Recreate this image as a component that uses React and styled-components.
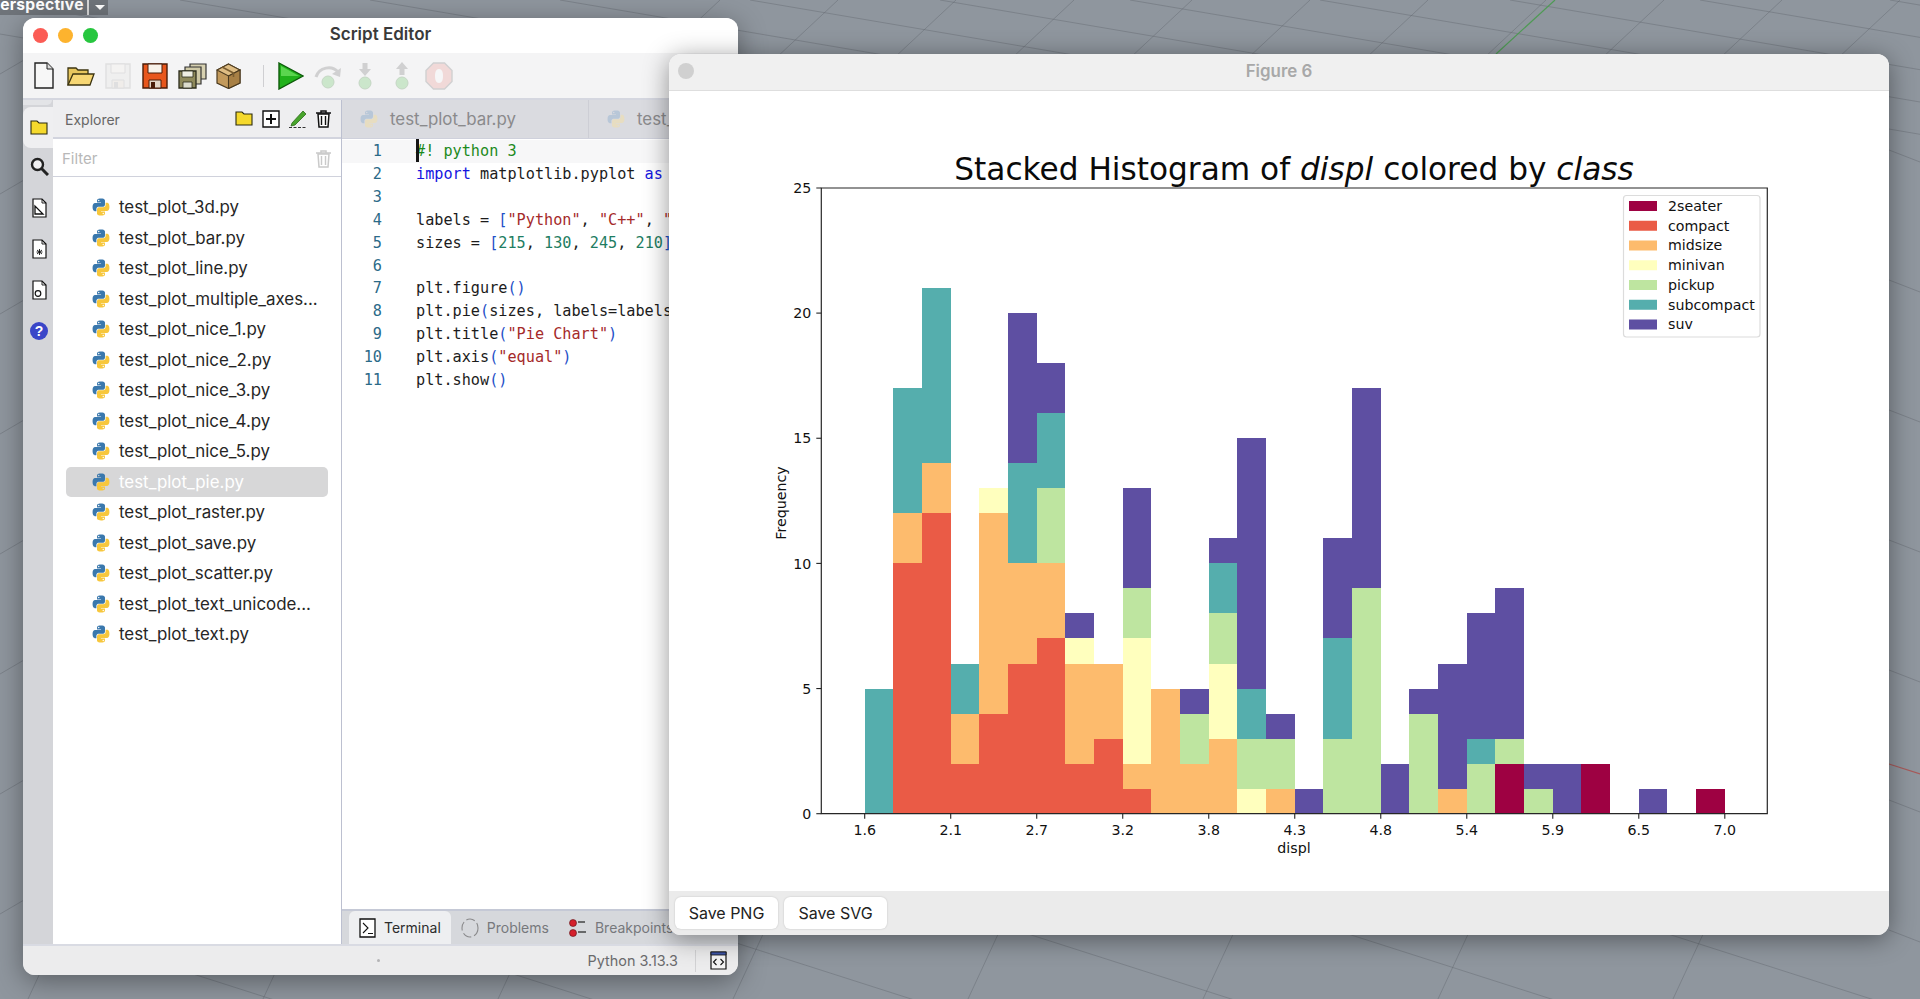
import React from "react";
import styled, { createGlobalStyle } from "styled-components";

const GlobalStyle = createGlobalStyle`
  html, body { margin: 0; padding: 0; width: 100%; height: 100%; overflow: hidden; }
  body { background: #8f969e; font-family: Inter, "Liberation Sans", sans-serif; }
`;

const Desktop = styled.div`
  position: relative;
  width: 1920px;
  height: 999px;
  overflow: hidden;
  background: #8f969e;
`;

const Backdrop = styled.svg`
  position: absolute;
  inset: 0;
`;

const ViewLabel = styled.div`
  position: absolute;
  top: 0;
  left: 0;
  width: 108px;
  height: 15px;
  display: flex;
  align-items: center;
  background: #6f747a;
  color: #fff;
  font-size: 15.6px;
  font-weight: 700;
  overflow: hidden;
`;

const ViewText = styled.span`
  margin-left: -10px;
  width: 99px;
  height: 15px;
  letter-spacing: 0.25px;
  border-right: 2px solid #d8d8d8;
  box-sizing: border-box;
  line-height: 10px;
`;

const ViewArrow = styled.span`
  margin-left: 6px;
  border-left: 5px solid transparent;
  border-right: 5px solid transparent;
  border-top: 5px solid #fff;
`;

const EditorWindow = styled.div`
  position: absolute;
  left: 23px;
  top: 18px;
  width: 715px;
  height: 957px;
  display: flex;
  flex-direction: column;
  border-radius: 12px;
  overflow: hidden;
  background: #ededef;
  box-shadow: 0 6px 28px rgba(0, 0, 0, 0.38);
`;

const TitleBar = styled.div`
  position: relative;
  height: 35px;
  flex: none;
  display: flex;
  align-items: center;
  justify-content: center;
  padding-bottom: 3px;
  box-sizing: border-box;
  background: #fff;
  color: #3a3a3a;
  font-size: 17px;
  font-weight: 600;
`;

const Lights = styled.div`
  position: absolute;
  left: 10px;
  top: 10px;
  display: flex;
  gap: 10px;
`;

const Light = styled.span`
  width: 15px;
  height: 15px;
  border-radius: 50%;
  background: ${(p) => p.$color};
`;

const Toolbar = styled.div`
  height: 47px;
  flex: none;
  display: flex;
  align-items: center;
  gap: 7px;
  padding-left: 6px;
  background: #f4f4f5;
  border-bottom: 2px solid #d5d7e0;
  box-sizing: border-box;
`;

const ToolSlot = styled.span`
  width: 30px;
  height: 30px;
  display: flex;
  align-items: center;
  justify-content: center;
  opacity: ${(p) => (p.$faded ? 0.22 : 1)};
`;

const ToolDivider = styled.span`
  width: 1px;
  height: 22px;
  margin: 0 5px 0 12px;
  background: #cfcfd2;
`;

const Workspace = styled.div`
  flex: 1;
  display: flex;
  min-height: 0;
`;

const Rail = styled.div`
  width: 30px;
  flex: none;
  display: flex;
  flex-direction: column;
  background: #d4d5d9;
`;

const RailCap = styled.div`
  height: 5px;
  margin-right: 1px;
  background: #e3e4e7;
  border-bottom-right-radius: 6px;
  flex: none;
`;

const RailTab = styled.div`
  height: 41px;
  flex: none;
  display: flex;
  align-items: center;
  justify-content: center;
  padding-left: 2px;
  box-sizing: border-box;
  background: ${(p) => (p.$active ? "#efeff1" : "transparent")};
  border-radius: ${(p) => (p.$active ? "8px 0 0 8px" : "0")};
  margin-top: ${(p) => (p.$active ? "2px" : "0")};
  margin-bottom: ${(p) => (p.$active ? "-2px" : "0")};
`;

const Explorer = styled.div`
  width: 289px;
  flex: none;
  display: flex;
  flex-direction: column;
  background: #fff;
  border-right: 1px solid #bcc0d0;
  box-sizing: border-box;
`;

const ExplorerHead = styled.div`
  height: 39px;
  flex: none;
  display: flex;
  align-items: center;
  padding: 0 10px 0 12px;
  gap: 9px;
  background: #eeeef0;
  border-bottom: 2px solid #d2d4de;
  box-sizing: border-box;
  color: #666;
  font-size: 14px;
`;

const HeadTitle = styled.span`
  flex: 1;
  padding-top: 2px;
`;

const FilterBar = styled.div`
  height: 38px;
  flex: none;
  display: flex;
  align-items: center;
  justify-content: space-between;
  padding: 2px 10px 0 9px;
  border-bottom: 1px solid #d0d2dc;
  box-sizing: border-box;
  color: #b8b8b8;
  font-size: 15px;
`;

const FileList = styled.div`
  flex: 1;
  display: flex;
  flex-direction: column;
  padding-top: 15px;
`;

const FileRow = styled.div`
  height: 30.5px;
  flex: none;
  margin: 0 13px;
  padding-left: 26px;
  display: flex;
  align-items: center;
  gap: 9px;
  border-radius: 5px;
  font-size: 16.9px;
  color: ${(p) => (p.$selected ? "#fff" : "#262626")};
  background: ${(p) => (p.$selected ? "#d7d7d8" : "transparent")};
`;

const EditorPane = styled.div`
  flex: 1;
  min-width: 0;
  display: flex;
  flex-direction: column;
  background: #fff;
`;

const TabStrip = styled.div`
  height: 39px;
  flex: none;
  display: flex;
  background: #dadbe0;
  border-bottom: 1px solid #cfd1dc;
  box-sizing: border-box;
`;

const EditorTab = styled.div`
  width: 247px;
  flex: none;
  display: flex;
  align-items: center;
  gap: 12px;
  padding-left: 18px;
  box-sizing: border-box;
  border-right: 1px solid #cdced5;
  color: #8a8a8c;
  font-size: 16.9px;
`;

const CodeArea = styled.div`
  position: relative;
  flex: 1;
  overflow: hidden;
  padding-top: 1px;
  font-family: "DejaVu Sans Mono", monospace;
  font-size: 15.2px;
`;

const CodeLine = styled.div`
  height: 22.85px;
  display: flex;
  align-items: center;
  white-space: pre;
  background: ${(p) => (p.$current ? "#f7f7f8" : "transparent")};
`;

const LineNo = styled.span`
  width: 40px;
  flex: none;
  margin-right: 34px;
  text-align: right;
  color: #2b6a88;
`;

const Caret = styled.span`
  position: absolute;
  left: 74px;
  top: 0;
  width: 2.5px;
  height: 23px;
  background: #151515;
`;

const Tok = styled.span`
  color: ${(p) => p.$c};
`;

const BottomTabs = styled.div`
  height: 35px;
  flex: none;
  display: flex;
  align-items: flex-end;
  padding-left: 7px;
  background: #d6d8dc;
  border-top: 2px solid #c5c9d6;
  box-sizing: border-box;
  color: #77787c;
  font-size: 14px;
`;

const BottomTab = styled.div`
  height: 33px;
  display: flex;
  align-items: center;
  gap: 8px;
  padding: 0 10px;
  box-sizing: border-box;
  border-radius: 6px 6px 0 0;
  background: ${(p) => (p.$active ? "#eeeff1" : "transparent")};
  color: ${(p) => (p.$active ? "#2c2c2c" : "inherit")};
  white-space: nowrap;
`;

const StatusBar = styled.div`
  height: 31px;
  flex: none;
  display: flex;
  align-items: center;
  justify-content: flex-end;
  padding-right: 11px;
  background: #ececed;
  border-top: 2px solid #d9dbe3;
  box-sizing: border-box;
  color: #6a6a6c;
  font-size: 14.4px;
`;

const StatusDot = styled.span`
  width: 3px;
  height: 3px;
  margin-left: 354px;
  margin-right: auto;
  border-radius: 50%;
  background: #b4b4b6;
`;

const StatusDivider = styled.span`
  width: 1px;
  height: 22px;
  margin: 0 14px 0 17px;
  background: #d2d2d4;
`;

const FigureWindow = styled.div`
  position: absolute;
  left: 669px;
  top: 54px;
  width: 1220px;
  height: 881px;
  display: flex;
  flex-direction: column;
  border-radius: 12px;
  overflow: hidden;
  background: #fff;
  box-shadow: 0 4px 26px rgba(0, 0, 0, 0.42);
`;

const FigureBar = styled.div`
  position: relative;
  height: 37px;
  flex: none;
  display: flex;
  align-items: center;
  justify-content: center;
  padding-bottom: 3px;
  background: #f0f0f0;
  border-bottom: 1px solid #dedede;
  box-sizing: border-box;
  color: #a8a8a8;
  font-size: 16.9px;
  font-weight: 600;
`;

const FigureDot = styled.span`
  position: absolute;
  left: 9px;
  top: 9px;
  width: 16px;
  height: 16px;
  border-radius: 50%;
  background: #d0d0d0;
`;

const PlotArea = styled.div`
  flex: 1;
  min-height: 0;
`;

const FigureFooter = styled.div`
  height: 44px;
  flex: none;
  display: flex;
  align-items: center;
  gap: 6px;
  padding-left: 6px;
  background: #ebebeb;
`;

const SaveButton = styled.div`
  height: 32px;
  display: flex;
  align-items: center;
  justify-content: center;
  width: ${(p) => p.$w}px;
  background: #fff;
  border-radius: 6px;
  box-shadow: 0 0 2px rgba(0, 0, 0, 0.18);
  color: #222;
  font-size: 16px;
`;

/* ---- icons ---- */

const PythonIcon = ({ faded }) => (
  <svg width="18" height="18" viewBox="0 0 32 32" style={{ flex: "none", opacity: faded ? 0.55 : 1 }}>
    <path
      fill={faded ? "#9db8d2" : "#3a78ad"}
      d="M15.9 1C8.6 1 9 4.2 9 4.2v3.6h7.1v1H6.2S1 8.300 1 16c0 7.700 4.300 7.400 4.300 7.400h2.500v-3.600s-.1-4.300 4.200-4.300h7.100s4 .1 4-3.900V5.100S24 1 15.900 1zm-3.900 2.300a1.300 1.300 0 1 1 0 2.600 1.300 1.300 0 0 1 0-2.600z"
    />
    <path
      transform="rotate(180 16 16)"
      fill={faded ? "#f3dfa8" : "#f7c73c"}
      d="M15.9 1C8.6 1 9 4.2 9 4.2v3.6h7.1v1H6.2S1 8.300 1 16c0 7.700 4.300 7.400 4.300 7.400h2.500v-3.600s-.1-4.300 4.200-4.300h7.100s4 .1 4-3.900V5.100S24 1 15.900 1zm-3.900 2.300a1.300 1.300 0 1 1 0 2.600 1.300 1.300 0 0 1 0-2.600z"
    />
  </svg>
);

const NewFileIcon = () => (
  <svg width="22" height="27" viewBox="0 0 22 27">
    <path d="M2 1h12l6 6v19H2z" fill="#f7f7f7" stroke="#222" strokeWidth="1.4" />
    <path d="M14 1v6h6" fill="#ddd" stroke="#222" strokeWidth="1" />
  </svg>
);

const OpenFolderIcon = () => (
  <svg width="28" height="21" viewBox="0 0 28 21">
    <path d="M1 20V3h8l2 2h10v5" fill="#e7c65e" stroke="#3c3410" strokeWidth="1.3" />
    <path d="M1 20l5-11h21l-4 11z" fill="#f7d774" stroke="#3c3410" strokeWidth="1.3" />
  </svg>
);

const FloppyIcon = ({ body = "#e8561c", line = "#4a1c08", w = 26 }) => (
  <svg width={w} height={w} viewBox="0 0 26 26">
    <path d="M1 1h24v24H1z" fill={body} stroke={line} strokeWidth="1.4" />
    <path d="M6 1h14v9H6z" fill="#f8f2ea" stroke={line} strokeWidth="1" />
    <path d="M7 17h12v8H7z" fill="#e3d6c7" stroke={line} strokeWidth="1" />
    <path d="M9 19h4v6H9z" fill={line} />
  </svg>
);

const SaveAllIcon = () => (
  <svg width="29" height="26" viewBox="0 0 29 26">
    <path d="M12 1h16v15H12z" fill="#d6d0b0" stroke="#333" strokeWidth="1.2" />
    <path d="M7 4h16v17H7z" fill="#cfc9a6" stroke="#333" strokeWidth="1.2" />
    <path d="M1 8h17v17H1z" fill="#8f8a5c" stroke="#2c2c1c" strokeWidth="1.3" />
    <path d="M4 8h11v6H4z" fill="#efeee2" stroke="#2c2c1c" strokeWidth="0.8" />
    <path d="M5 19h9v6H5z" fill="#dcdccd" stroke="#2c2c1c" strokeWidth="0.8" />
  </svg>
);

const BoxIcon = () => (
  <svg width="25" height="26" viewBox="0 0 25 26" style={{ marginRight: "2px" }}>
    <path d="M12.500 1L24 7v13l-11.500 5.500L1 20V7z" fill="#c39a5c" stroke="#4b3a1f" strokeWidth="1.2" />
    <path d="M1 7l11.500 6L24 7l-11.500-6z" fill="#dfbd83" stroke="#4b3a1f" strokeWidth="1.1" />
    <path d="M12.500 13v12.500L24 20V7z" fill="#a88045" stroke="#4b3a1f" strokeWidth="1.1" />
    <path d="M6 4l11.500 6v4" fill="none" stroke="#7a5d30" strokeWidth="1.6" />
  </svg>
);

const PlayIcon = () => (
  <svg width="26" height="28" viewBox="0 0 26 28">
    <path d="M1 1l24 13L1 27z" fill="#21b21b" stroke="#0d5b0a" strokeWidth="1.4" />
    <path d="M3 4l18 10H3z" fill="#5bd54f" />
  </svg>
);

const StepOverIcon = () => (
  <svg width="28" height="27" viewBox="0 0 28 27">
    <circle cx="14" cy="20" r="6" fill="#3fb93a" stroke="#1f6e1c" />
    <path d="M2 15C5 5 18 3 24 10" fill="none" stroke="#555" strokeWidth="3" />
    <path d="M27 6l-1 9-8-3z" fill="#555" />
  </svg>
);

const StepIcon = ({ up }) => (
  <svg width="18" height="28" viewBox="0 0 18 28">
    <circle cx="9" cy="21" r="6" fill="#3fb93a" stroke="#1f6e1c" />
    <path d={up ? "M9 0l6 7h-3.500v6h-5V7H3z" : "M9 14l6-7h-3.500V1h-5v6H3z"} fill="#555" />
  </svg>
);

const StopIcon = () => (
  <svg width="28" height="28" viewBox="0 0 28 28">
    <path d="M8.500 1h11L27 8.500v11L19.500 27h-11L1 19.500v-11z" fill="#ea7d74" stroke="#555" strokeWidth="1.4" />
    <path d="M14 7c3 0 4 3 4 7s-1 7-4 7-4-3-4-7 1-7 4-7z" fill="#fff" />
  </svg>
);

const SmallFolderIcon = () => (
  <svg width="18" height="15" viewBox="0 0 18 15">
    <path d="M1 14V1h6l2 2h8v11z" fill="#f5d92c" stroke="#2b2b10" strokeWidth="1.1" />
  </svg>
);

const PlusBoxIcon = () => (
  <svg width="18" height="18" viewBox="0 0 18 18">
    <path d="M1 1h16v16H1z" fill="#fff" stroke="#111" strokeWidth="1.4" />
    <path d="M9 4v10M4 9h10" stroke="#111" strokeWidth="2" />
  </svg>
);

const PencilIcon = () => (
  <svg width="18" height="18" viewBox="0 0 18 18">
    <path d="M3 13L14 1l3 3L6 15l-4 1z" fill="#48a52c" stroke="#2d6b1a" strokeWidth="0.8" />
    <path d="M0 17.500h18" stroke="#333" strokeWidth="1" strokeDasharray="3 1.500" />
  </svg>
);

const TrashIcon = ({ faded }) => (
  <svg width="15" height="18" viewBox="0 0 15 18" style={{ opacity: faded ? 0.22 : 1 }}>
    <path d="M2 4l1 13h9l1-13z" fill="#fff" stroke="#111" strokeWidth="1.5" />
    <path d="M0 3h15M5 3V1h5v2" fill="none" stroke="#111" strokeWidth="1.5" />
    <path d="M5.500 6v9M9.500 6v9" stroke="#111" strokeWidth="1.4" />
  </svg>
);

const RailSearchIcon = () => (
  <svg width="19" height="19" viewBox="0 0 19 19">
    <circle cx="7.500" cy="7.500" r="5.500" fill="#f0f0f2" stroke="#222" strokeWidth="2.400" />
    <path d="M11.500 11.500L18 18" stroke="#222" strokeWidth="3" />
  </svg>
);

const RailDocIcon = ({ kind }) => (
  <svg width="15" height="20" viewBox="0 0 15 20">
    <path d="M1 1h9l4 4v14H1z" fill="#fff" stroke="#111" strokeWidth="1.2" />
    <path d="M10 1v4h4" fill="none" stroke="#111" strokeWidth="0.9" />
    {kind === "ruler" && <path d="M3 16V8l8 8z" fill="none" stroke="#111" strokeWidth="1.300" />}
    {kind === "star" && <path d="M7.500 10v6M4.500 13h6M5 11l5 4M10 11l-5 4" stroke="#111" strokeWidth="0.9" />}
    {kind === "circle" && <circle cx="6" cy="13.500" r="2.800" fill="none" stroke="#111" strokeWidth="1.200" />}
  </svg>
);

const HelpIcon = () => (
  <svg width="18" height="18" viewBox="0 0 18 18">
    <circle cx="9" cy="9" r="9" fill="#3a46c8" />
    <text x="9" y="14" textAnchor="middle" fill="#fff" fontSize="14" fontWeight="700" fontFamily="Liberation Sans">
      ?
    </text>
  </svg>
);

const TerminalIcon = () => (
  <svg width="17" height="20" viewBox="0 0 17 20">
    <path d="M1 1h15v18H1z" fill="#fff" stroke="#111" strokeWidth="1.300" />
    <path d="M4 5l5 5-5 5M9 15.500h5" fill="none" stroke="#111" strokeWidth="1.100" />
  </svg>
);

const ProblemsIcon = () => (
  <svg width="18" height="20" viewBox="0 0 18 20">
    <ellipse cx="9" cy="10" rx="8" ry="9" fill="none" stroke="#8a8a8c" strokeWidth="1.100" strokeDasharray="9 3" />
  </svg>
);

const BreakpointsIcon = () => (
  <svg width="18" height="18" viewBox="0 0 18 18">
    <circle cx="4" cy="4" r="3.500" fill="#d4202c" stroke="#5a1015" strokeWidth="0.6" />
    <circle cx="4" cy="14" r="3.500" fill="#d4202c" stroke="#5a1015" strokeWidth="0.6" />
    <path d="M9 3h7M9 13h8" stroke="#444" strokeWidth="1.300" />
  </svg>
);

const ConsoleIcon = () => (
  <svg width="17" height="19" viewBox="0 0 17 19">
    <path d="M1 1h15v17H1z" fill="#f5f5f5" stroke="#111" strokeWidth="1.200" />
    <path d="M1 1h15v3H1z" fill="#3f56a8" stroke="#111" strokeWidth="0.8" />
    <path d="M6.500 8l-3 3 3 3M10.500 8l3 3-3 3" fill="none" stroke="#111" strokeWidth="1.100" />
  </svg>
);

/* ---- data ---- */

const FILES = [
  "test_plot_3d.py",
  "test_plot_bar.py",
  "test_plot_line.py",
  "test_plot_multiple_axes...",
  "test_plot_nice_1.py",
  "test_plot_nice_2.py",
  "test_plot_nice_3.py",
  "test_plot_nice_4.py",
  "test_plot_nice_5.py",
  "test_plot_pie.py",
  "test_plot_raster.py",
  "test_plot_save.py",
  "test_plot_scatter.py",
  "test_plot_text_unicode...",
  "test_plot_text.py",
];

const INK = "#1c1c1c";
const BLUE = "#1f50c8";
const RED = "#a52a2a";
const NUM = "#1e7d62";

const CODE = [
  [["#! python 3", "#1c8a1c"]],
  [["import", "#1414e0"], [" matplotlib.pyplot ", INK], ["as", "#1414e0"], [" plt", INK]],
  [],
  [["labels = ", INK], ["[", BLUE], ['"Python"', RED], [", ", INK], ['"C++"', RED], [", ", INK], ['"Java"', RED], ["]", BLUE]],
  [["sizes = ", INK], ["[", BLUE], ["215", NUM], [", ", INK], ["130", NUM], [", ", INK], ["245", NUM], [", ", INK], ["210", NUM], ["]", BLUE]],
  [],
  [["plt.figure", INK], ["()", BLUE]],
  [["plt.pie", INK], ["(", BLUE], ["sizes, labels=labels", INK], [")", BLUE]],
  [["plt.title", INK], ["(", BLUE], ['"Pie Chart"', RED], [")", BLUE]],
  [["plt.axis", INK], ["(", BLUE], ['"equal"', RED], [")", BLUE]],
  [["plt.show", INK], ["()", BLUE]],
];

const CLASSES = [
  ["2seater", "#9e0142"],
  ["compact", "#ea5b46"],
  ["midsize", "#fdbb6d"],
  ["minivan", "#ffffbe"],
  ["pickup", "#bee5a0"],
  ["subcompact", "#55aead"],
  ["suv", "#5e4fa2"],
];

// counts per bin, in stacking order of CLASSES
const BINS = [
  [0, 0, 0, 0, 0, 5, 0],
  [0, 10, 2, 0, 0, 5, 0],
  [0, 12, 2, 0, 0, 7, 0],
  [0, 2, 2, 0, 0, 2, 0],
  [0, 4, 8, 1, 0, 0, 0],
  [0, 6, 4, 0, 0, 4, 6],
  [0, 7, 3, 0, 3, 3, 2],
  [0, 2, 4, 1, 0, 0, 1],
  [0, 3, 3, 0, 0, 0, 0],
  [0, 1, 1, 5, 2, 0, 4],
  [0, 0, 5, 0, 0, 0, 0],
  [0, 0, 2, 0, 2, 0, 1],
  [0, 0, 3, 3, 2, 2, 1],
  [0, 0, 0, 1, 2, 2, 10],
  [0, 0, 1, 0, 2, 0, 1],
  [0, 0, 0, 0, 0, 0, 1],
  [0, 0, 0, 0, 3, 4, 4],
  [0, 0, 0, 0, 9, 0, 8],
  [0, 0, 0, 0, 0, 0, 2],
  [0, 0, 0, 0, 4, 0, 1],
  [0, 0, 1, 0, 0, 0, 5],
  [0, 0, 0, 0, 2, 1, 5],
  [2, 0, 0, 0, 1, 0, 6],
  [0, 0, 0, 0, 1, 0, 1],
  [0, 0, 0, 0, 0, 0, 2],
  [2, 0, 0, 0, 0, 0, 0],
  [0, 0, 0, 0, 0, 0, 0],
  [0, 0, 0, 0, 0, 0, 1],
  [0, 0, 0, 0, 0, 0, 0],
  [1, 0, 0, 0, 0, 0, 0],
];

const X_TICKS = ["1.6", "2.1", "2.7", "3.2", "3.8", "4.3", "4.8", "5.4", "5.9", "6.5", "7.0"];

const AX = { left: 821.3, right: 1767.3, top: 188, bottom: 813.7, x0: 864.7, bin: 28.67, unit: 25.03 };

const FONT = "'DejaVu Sans', sans-serif";
const LABEL = 14.2;

function Histogram() {
  const bars = [];
  BINS.forEach((counts, i) => {
    let sum = 0;
    counts.forEach((n, c) => {
      if (!n) return;
      bars.push(
        <rect
          key={`${i}-${c}`}
          x={AX.x0 + i * AX.bin}
          y={AX.bottom - (sum + n) * AX.unit}
          width={AX.bin}
          height={n * AX.unit}
          fill={CLASSES[c][1]}
          shapeRendering="crispEdges"
        />
      );
      sum += n;
    });
  });

  return (
    <svg width="1220" height="800" viewBox="669 91 1220 800" style={{ display: "block" }}>
      <text x="1294" y="179.5" textAnchor="middle" fontFamily={FONT} fontSize="31.2" fill="#0a0a0a">
        Stacked Histogram of <tspan fontStyle="italic">displ</tspan> colored by <tspan fontStyle="italic">class</tspan>
      </text>
      {bars}
      <path
        d={`M${AX.left} ${AX.top}H${AX.right}V${AX.bottom}H${AX.left}Z`}
        fill="none"
        stroke="#262626"
        strokeWidth="1.2"
      />
      {[0, 5, 10, 15, 20, 25].map((v) => {
        const y = AX.bottom - v * AX.unit;
        return (
          <g key={v}>
            <path d={`M${AX.left - 5} ${y}H${AX.left}`} stroke="#222" strokeWidth="1.1" />
            <text x={AX.left - 10} y={y + 5.1} textAnchor="end" fontFamily={FONT} fontSize={LABEL} fill="#111">
              {v}
            </text>
          </g>
        );
      })}
      {X_TICKS.map((t, i) => {
        const x = AX.x0 + i * 3 * AX.bin;
        return (
          <g key={t}>
            <path d={`M${x} ${AX.bottom}v5`} stroke="#222" strokeWidth="1.1" />
            <text x={x} y={834.5} textAnchor="middle" fontFamily={FONT} fontSize={LABEL} fill="#111">
              {t}
            </text>
          </g>
        );
      })}
      <text x="1294" y="852.5" textAnchor="middle" fontFamily={FONT} fontSize={LABEL} fill="#111">
        displ
      </text>
      <text
        transform="translate(786 503) rotate(-90)"
        textAnchor="middle"
        fontFamily={FONT}
        fontSize={LABEL}
        fill="#111"
      >
        Frequency
      </text>
      <rect x="1623.500" y="195.500" width="136.500" height="141.500" rx="3" fill="#fff" stroke="#dcdcdc" strokeWidth="1.200" />
      {CLASSES.map(([name, color], i) => {
        const y = 206 + i * 19.75;
        return (
          <g key={name}>
            <rect x="1629" y={y - 5} width="28" height="10" fill={color} />
            <text x="1668" y={y + 4.8} fontFamily={FONT} fontSize={LABEL} fill="#111">
              {name}
            </text>
          </g>
        );
      })}
    </svg>
  );
}

function desktopLines() {
  const out = [];
  for (let x = -200; x < 1920; x += 190) out.push([x, 0, x + 800, 136]);
  for (let x = 720; x < 2000; x += 118) out.push([x, 0, x - 62, 58]);
  for (let x = 40; x < 2100; x += 320) out.push([x, 925, x + 300, 1021]);
  for (let x = 60; x < 1920; x += 235) out.push([x, 930, x - 32, 999]);
  for (let y = 60; y < 999; y += 120) out.push([0, y + 14, 24, y]);
  for (let y = 150; y < 999; y += 130) out.push([1889, y, 1920, y + 12]);
  return out;
}

const TOOLS = [
  { id: "new", node: <NewFileIcon /> },
  { id: "open", node: <OpenFolderIcon /> },
  { id: "save-off", node: <FloppyIcon body="#dedede" line="#9a9a9a" />, faded: true },
  { id: "save", node: <FloppyIcon /> },
  { id: "save-all", node: <SaveAllIcon /> },
  { id: "box", node: <BoxIcon /> },
];

const RUN_TOOLS = [
  { id: "run", node: <PlayIcon /> },
  { id: "over", node: <StepOverIcon />, faded: true },
  { id: "into", node: <StepIcon />, faded: true },
  { id: "out", node: <StepIcon up />, faded: true },
  { id: "stop", node: <StopIcon />, faded: true },
];

export default function App() {
  return (
    <Desktop>
      <GlobalStyle />
      <Backdrop width="1920" height="999" viewBox="0 0 1920 999">
        {desktopLines().map(([x1, y1, x2, y2], i) => (
          <line key={i} x1={x1} y1={y1} x2={x2} y2={y2} stroke="#5e646c" strokeOpacity="0.4" strokeWidth="1" />
        ))}
        <line x1="1555" y1="0" x2="1496" y2="54" stroke="#4f9a55" strokeWidth="1.200" />
        <line x1="1889" y1="764" x2="1920" y2="774" stroke="#a85a5a" strokeWidth="1.200" />
      </Backdrop>

      <ViewLabel>
        <ViewText>Perspective</ViewText>
        <ViewArrow />
      </ViewLabel>

      <EditorWindow>
        <TitleBar>
          <Lights>
            <Light $color="#fb5c55" />
            <Light $color="#fdb32e" />
            <Light $color="#27c63f" />
          </Lights>
          Script Editor
        </TitleBar>
        <Toolbar>
          {TOOLS.map((t) => (
            <ToolSlot key={t.id} $faded={t.faded}>
              {t.node}
            </ToolSlot>
          ))}
          <ToolDivider />
          {RUN_TOOLS.map((t) => (
            <ToolSlot key={t.id} $faded={t.faded}>
              {t.node}
            </ToolSlot>
          ))}
        </Toolbar>
        <Workspace>
          <Rail>
            <RailCap />
            <RailTab $active>
              <SmallFolderIcon />
            </RailTab>
            <RailTab>
              <RailSearchIcon />
            </RailTab>
            <RailTab>
              <RailDocIcon kind="ruler" />
            </RailTab>
            <RailTab>
              <RailDocIcon kind="star" />
            </RailTab>
            <RailTab>
              <RailDocIcon kind="circle" />
            </RailTab>
            <RailTab>
              <HelpIcon />
            </RailTab>
          </Rail>
          <Explorer>
            <ExplorerHead>
              <HeadTitle>Explorer</HeadTitle>
              <SmallFolderIcon />
              <PlusBoxIcon />
              <PencilIcon />
              <TrashIcon />
            </ExplorerHead>
            <FilterBar>
              Filter
              <TrashIcon faded />
            </FilterBar>
            <FileList>
              {FILES.map((name) => {
                const selected = name === "test_plot_pie.py";
                return (
                  <FileRow key={name} $selected={selected}>
                    <PythonIcon />
                    {name}
                  </FileRow>
                );
              })}
            </FileList>
          </Explorer>
          <EditorPane>
            <TabStrip>
              <EditorTab>
                <PythonIcon faded />
                test_plot_bar.py
              </EditorTab>
              <EditorTab>
                <PythonIcon faded />
                test_plot_line.py
              </EditorTab>
            </TabStrip>
            <CodeArea>
              {CODE.map((tokens, i) => (
                <CodeLine key={i} $current={i === 0}>
                  <LineNo>{i + 1}</LineNo>
                  {tokens.map(([text, color], j) => (
                    <Tok key={j} $c={color}>
                      {text}
                    </Tok>
                  ))}
                </CodeLine>
              ))}
              <Caret />
            </CodeArea>
            <BottomTabs>
              <BottomTab $active>
                <TerminalIcon />
                Terminal
              </BottomTab>
              <BottomTab>
                <ProblemsIcon />
                Problems
              </BottomTab>
              <BottomTab>
                <BreakpointsIcon />
                Breakpoints
              </BottomTab>
            </BottomTabs>
          </EditorPane>
        </Workspace>
        <StatusBar>
          <StatusDot />
          Python 3.13.3
          <StatusDivider />
          <ConsoleIcon />
        </StatusBar>
      </EditorWindow>

      <FigureWindow>
        <FigureBar>
          <FigureDot />
          Figure 6
        </FigureBar>
        <PlotArea>
          <Histogram />
        </PlotArea>
        <FigureFooter>
          <SaveButton $w={103}>Save PNG</SaveButton>
          <SaveButton $w={103}>Save SVG</SaveButton>
        </FigureFooter>
      </FigureWindow>
    </Desktop>
  );
}
